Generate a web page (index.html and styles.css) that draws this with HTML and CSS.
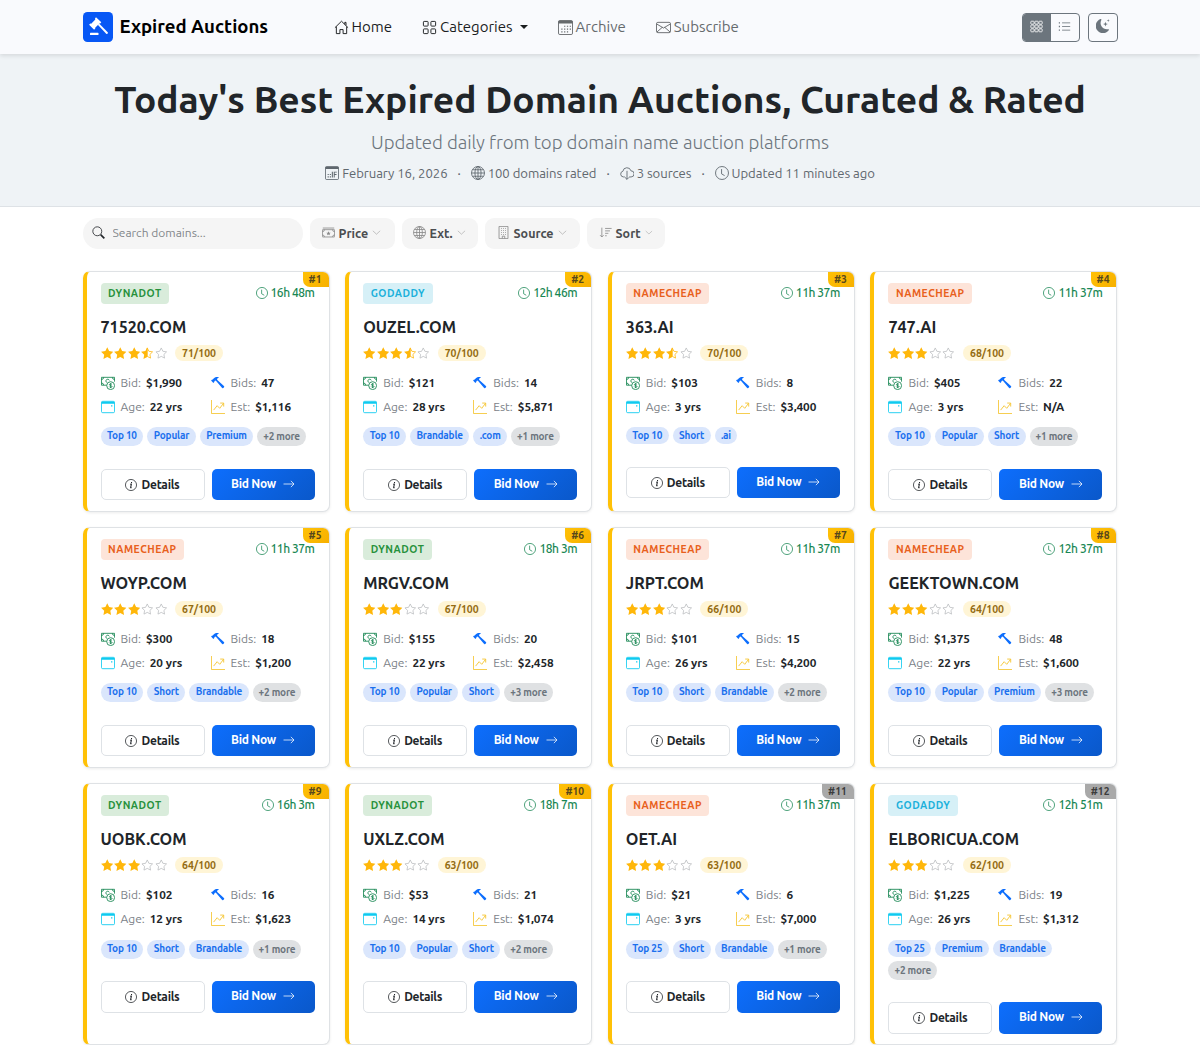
FILE: index.html
```html
<!DOCTYPE html>
<html lang="en">
<head>
  <meta charset="UTF-8">
  <meta name="viewport" content="width=device-width, initial-scale=1.0">
  <title>Expired Auctions</title>
  <link rel="stylesheet" href="styles.css">
</head>
<body>

  <!-- Icon sprite -->
  <svg class="sprite" xmlns="http://www.w3.org/2000/svg">
    <symbol id="house" viewBox="0 0 16 16"><path d="M1 8.2 8 1.3l7 6.900M2.500 7v7.500h3.800v-4.300h3.400v4.300h3.800V7M11.500 4.500V2.500h1.300v3.300"/></symbol>
    <symbol id="grid" viewBox="0 0 16 16"><rect x="1.500" y="1.500" width="5" height="5" rx=".8"/><rect x="9.500" y="1.500" width="5" height="5" rx=".8"/><rect x="1.500" y="9.500" width="5" height="5" rx=".8"/><rect x="9.500" y="9.500" width="5" height="5" rx=".8"/></symbol>
    <symbol id="calendar" viewBox="0 0 16 16"><rect x=".5" y=".5" width="15" height="15" rx="1.500"/><path class="fill" d="M.5 1h15v2.700H.5zM6.500 6h1.300v1.300h-1.300zm3 0h1.300v1.300h-1.300zm3 0h1.300v1.300h-1.300zm-9 3h1.300v1.300h-1.300zm3 0h1.300v1.300h-1.300zm3 0h1.300v1.300h-1.300zm3 0h1.300v1.300h-1.300zm-9 3h1.300v1.300h-1.300zm3 0h1.300v1.300h-1.300zm3 0h1.300v1.300h-1.300z"/></symbol>
    <symbol id="date" viewBox="0 0 16 16"><rect x=".5" y=".5" width="15" height="15" rx="1.500"/><path class="fill" d="M.5 1h15v2.300H.5zM3 9h1.300v1.300H3zM3 11.700h1.300V13H3zM5.500 9h1.300v1.300H5.500zM5.500 11.700h1.300V13H5.500zM7.800 6.500h1.200V13H7.800zM10 6.500h1.100V13H10zM11 6.500h2.500v1H11zM11 9.200h2.200v1H11z"/></symbol>
    <symbol id="envelope" viewBox="0 0 16 16"><rect x=".5" y="2.500" width="15" height="11" rx="1.500"/><path d="m.7 4.200 7.300 4.400 7.300-4.400M1 12.800l5.700-5M15 12.800l-5.700-5"/></symbol>
    <symbol id="grid3" viewBox="0 0 16 16"><rect x="1" y="1.500" width="4" height="3.600" rx=".8"/><rect x="6" y="1.500" width="4" height="3.600" rx=".8"/><rect x="11" y="1.500" width="4" height="3.600" rx=".8"/><rect x="1" y="6.200" width="4" height="3.600" rx=".8"/><rect x="6" y="6.200" width="4" height="3.600" rx=".8"/><rect x="11" y="6.200" width="4" height="3.600" rx=".8"/><rect x="1" y="10.900" width="4" height="3.600" rx=".8"/><rect x="6" y="10.900" width="4" height="3.600" rx=".8"/><rect x="11" y="10.900" width="4" height="3.600" rx=".8"/></symbol>
    <symbol id="list" viewBox="0 0 16 16"><path d="M5 3.500h10M5 8h10M5 12.500h10"/><path class="fill" d="M1 2.700h1.500v1.600H1zM1 7.200h1.500v1.600H1zM1 11.700h1.500v1.600H1z"/></symbol>
    <symbol id="moon" viewBox="0 0 16 16"><path class="fill" d="M6 .3a.8.800 0 0 1 .1.900A7.200 7.200 0 0 0 12.500 11.800c.5 0 1-.1 1.500-.2.700-.1 1.200.500.800 1A8.300 8.300 0 1 1 5.100.1a.8.800 0 0 1 .9.200M10.800 3.100l.7 2 2 .7-2 .7-.7 2-.7-2-2-.7 2-.7zM14 .1l.4 1.300 1.300.4-1.300.4-.4 1.300-.4-1.300-1.300-.4 1.300-.4z"/></symbol>
    <symbol id="globe" viewBox="0 0 16 16"><circle cx="8" cy="8" r="7.400"/><ellipse cx="8" cy="8" rx="3.500" ry="7.400"/><path d="M8 .6v14.800M.6 8h14.800M1.800 4.300h12.400M1.800 11.700h12.400"/></symbol>
    <symbol id="cloud" viewBox="0 0 16 16"><path d="M5.500 12.500H4a3.300 3.300 0 0 1-.7-6.500A4.700 4.700 0 0 1 12.500 5.500a3.500 3.500 0 0 1 .2 7H10.500M8 5.500v9.700M5.700 13 8 15.300l2.300-2.300"/></symbol>
    <symbol id="clock" viewBox="0 0 16 16"><circle cx="8" cy="8" r="7.400"/><path d="M7.500 3.500V9l3.500 2"/></symbol>
    <symbol id="search" viewBox="0 0 16 16"><circle cx="6.500" cy="6.500" r="5.500"/><path stroke-width="2" d="m10.600 10.600 4.600 4.600"/></symbol>
    <symbol id="cash" viewBox="0 0 16 16"><path d="M1 2.500h14"/><rect x=".5" y="4.500" width="15" height="9" rx=".5"/><path d="M3 4.500a2.500 2.500 0 0 1-2.500 2.500M13 4.500A2.500 2.500 0 0 0 15.500 7M.5 11A2.500 2.500 0 0 1 3 13.500M15.500 11a2.500 2.500 0 0 0-2.500 2.500"/><path class="fill" d="m8 6.500.8 1.700 1.900.2-1.400 1.200.4 1.900L8 10.600l-1.700.9.4-1.900-1.400-1.200 1.900-.2z"/></symbol>
    <symbol id="building" viewBox="0 0 16 16"><path d="M2.500.5h11v15h-11zM6.500 15.500v-3h3v3M5 3h1M7.500 3h1M10 3h1M5 5.500h1M7.500 5.500h1M10 5.500h1M5 8h1M7.500 8h1M10 8h1M5 10.500h1M7.500 10.500h1M10 10.500h1"/></symbol>
    <symbol id="sort" viewBox="0 0 16 16"><path d="M3.500 2v11.500M1.300 11.300l2.200 2.200 2.200-2.200M7.500 3h8M7.500 6h6M7.500 9h4M7.500 12h2"/></symbol>
    <symbol id="chevron" viewBox="0 0 16 16"><path d="m1.500 5 6.500 6 6.500-6"/></symbol>
    <symbol id="bid" viewBox="0 0 16 16"><path d="M6.500 10.500h-6v-9h15v5M3 1.500A2.500 2.500 0 0 1 .5 4M13 1.500A2.500 2.500 0 0 0 15.500 4M.5 8A2.500 2.500 0 0 1 3 10.500"/><path d="M9.500 5a2 2 0 1 0-2.700 2.500"/><circle cx="11" cy="11" r="4.500"/><path d="M12.500 9.700c-.3-1-2.900-1-2.900.2 0 1.400 3 .8 3 2.200 0 1.200-2.800 1.200-3.200 0M11 8.200v5.600"/></symbol>
    <symbol id="hammer" viewBox="0 0 16 16"><path class="fill" d="M9.200 1.500C7.200.7 4.800 1.100 3.300 2.600L1.700 4.200l-.4-.2-1.200 1.200 2.600 2.700 1.300-1.200-.2-.6 1-.9 1.100.4 6.600 7.900c.4.500 1.100.5 1.500.1l.9-.8c.4-.4.400-1.100-.1-1.500L7.200 4.700l-.3-1.300c.6-.8 1.300-1.200 2.300-1.900"/></symbol>
    <symbol id="age" viewBox="0 0 16 16"><rect x=".5" y="1.500" width="15" height="13" rx="1.500"/><path class="fill" d="M.5 2h15v2.200H.5zM11.500 6h1.500v1.500h-1.500z"/></symbol>
    <symbol id="graph" viewBox="0 0 16 16"><path d="M.5 0v15.500H16M3 11.500l4-5 3 3 4.300-5.700M10.500 3.500h4V7.500"/></symbol>
    <symbol id="star" viewBox="0 0 16 16"><path class="fill" d="m8 .3 2.400 4.900 5.500.8-4 3.800 1 5.500L8 12.700l-4.900 2.600 1-5.500-4-3.800 5.500-.8z"/></symbol>
    <symbol id="half" viewBox="0 0 16 16"><path d="m8 1.200 2.100 4.300 4.700.7-3.400 3.300.8 4.700L8 12z"/><path class="fill" d="M8 .3v12.400l-4.900 2.600 1-5.500-4-3.800 5.500-.8z"/></symbol>
    <symbol id="empty" viewBox="0 0 16 16"><path d="m8 1.200 2.100 4.300 4.700.7-3.400 3.300.8 4.700L8 12l-4.200 2.200.8-4.700-3.400-3.300 4.700-.7z"/></symbol>
    <symbol id="info" viewBox="0 0 16 16"><circle cx="8" cy="8" r="7.400"/><path stroke-width="1.400" d="M6.900 7.100 8.500 6.800 7.500 11.500q0 .5 1.400 0M8.700 3.900v1.300"/></symbol>
    <symbol id="arrow" viewBox="0 0 16 16"><path d="M.7 8h14M10.500 3.800 14.700 8l-4.200 4.200"/></symbol>
  </svg>

  <nav class="navbar">
    <div class="container">
      <a class="brand" href="#">
        <svg class="logo" viewBox="0 0 30 30">
          <rect width="30" height="30" rx="4.500" fill="#0757f5"/>
          <g fill="#fff">
            <path d="m13 5.200 5.300 5.100-1.100 1.200-.8-.1-4.200 4.300.1.900-1.200 1.200-5-5 1.200-1.200.9.100 4.100-4.300-.3-1z"/>
            <path d="m14.800 12.700 1.300-1.300 8.600 8.900c.8.900-.7 2.300-1.500 1.500z"/>
            <rect x="7" y="20.800" width="8.500" height="2.300" rx=".6"/>
          </g>
        </svg>
        <span>Expired Auctions</span>
      </a>
      <div class="nav-links">
        <a class="nav-link active" href="#"><svg class="icon"><use href="#house"/></svg><span>Home</span></a>
        <a class="nav-link active" href="#"><svg class="icon"><use href="#grid"/></svg><span>Categories</span><i class="caret"></i></a>
        <a class="nav-link" href="#"><svg class="icon"><use href="#calendar"/></svg><span>Archive</span></a>
        <a class="nav-link" href="#"><svg class="icon"><use href="#envelope"/></svg><span>Subscribe</span></a>
      </div>
      <div class="nav-tools">
        <div class="view-toggle">
          <button class="on" aria-label="Grid view"><svg class="icon"><use href="#grid3"/></svg></button>
          <button aria-label="List view"><svg class="icon"><use href="#list"/></svg></button>
        </div>
        <button class="theme-btn" aria-label="Dark mode"><svg class="icon"><use href="#moon"/></svg></button>
      </div>
    </div>
  </nav>

  <header class="hero">
    <h1>Today's Best Expired Domain Auctions, Curated &amp; Rated</h1>
    <p class="lead">Updated daily from top domain name auction platforms</p>
    <div class="meta">
      <span><svg class="icon"><use href="#date"/></svg>February 16, 2026</span>
      <b>·</b>
      <span><svg class="icon"><use href="#globe"/></svg>100 domains rated</span>
      <b>·</b>
      <span><svg class="icon"><use href="#cloud"/></svg>3 sources</span>
      <b>·</b>
      <span><svg class="icon"><use href="#clock"/></svg>Updated 11 minutes ago</span>
    </div>
  </header>

  <main class="container">
    <div class="filters">
      <label class="search">
        <svg class="icon"><use href="#search"/></svg>
        <input type="text" placeholder="Search domains...">
      </label>
      <button class="filter price"><svg class="icon"><use href="#cash"/></svg>Price<svg class="chev"><use href="#chevron"/></svg></button>
      <button class="filter ext"><svg class="icon"><use href="#globe"/></svg>Ext.<svg class="chev"><use href="#chevron"/></svg></button>
      <button class="filter source"><svg class="icon"><use href="#building"/></svg>Source<svg class="chev"><use href="#chevron"/></svg></button>
      <button class="filter sort"><svg class="icon"><use href="#sort"/></svg>Sort<svg class="chev"><use href="#chevron"/></svg></button>
    </div>
    <div class="cards" id="cards"></div>
  </main>

  <script src="script.js"></script>
</body>
</html>
```
FILE: styles.css
```css
* {
  box-sizing: border-box;
}

body {
  margin: 0;
  font-family: Ubuntu, "Noto Sans", "Open Sans", sans-serif;
  font-size: 15px;
  color: #212529;
  background: #fff;
  overflow: hidden;
}

a {
  color: inherit;
  text-decoration: none;
}

button, input {
  font-family: inherit;
}

.sprite {
  display: none;
}

symbol, .icon, .chev {
  fill: none;
  stroke: currentColor;
  stroke-width: 1;
}

.fill {
  fill: currentColor;
  stroke: none;
}

.icon {
  width: 14px;
  height: 14px;
  flex: none;
}

.container {
  width: 1035px;
  margin: 0 auto;
}

/* Navbar */
.navbar {
  position: relative;
  height: 54px;
  background: #f9fafd;
  box-shadow: 0 2px 4px rgba(0, 0, 0, 0.1);
}

.navbar .container {
  display: flex;
  align-items: center;
  height: 54px;
}

.brand {
  display: flex;
  align-items: center;
  gap: 7px;
  width: 251px;
  font-size: 18.6px;
  font-weight: 600;
  line-height: 24px;
  color: #000;
  white-space: nowrap;
}

.nav-link span {
  padding-bottom: 2px;
}

.logo {
  width: 30px;
  height: 30px;
}

.nav-links {
  display: flex;
  gap: 30px;
}

.nav-link {
  display: flex;
  align-items: center;
  gap: 3px;
  color: #666a6d;
}

.nav-link .icon {
  width: 15px;
  height: 15px;
}

.active {
  color: #1b1d1f;
}

.caret {
  margin-left: 4px;
  border: 4px solid transparent;
  border-top-color: #1b1d1f;
  border-bottom: 0;
}

.nav-tools {
  display: flex;
  gap: 8px;
  margin-left: auto;
}

.view-toggle {
  display: flex;
  border: 1px solid #6c757d;
  border-radius: 4px;
  overflow: hidden;
}

.nav-tools button {
  display: flex;
  align-items: center;
  justify-content: center;
  width: 28px;
  height: 27px;
  padding: 0 0 2px;
  border: 0;
  background: transparent;
  color: #6c757d;
}

.nav-tools .icon {
  width: 13px;
  height: 13px;
}

.nav-tools .view-toggle .on {
  background: #6c757d;
  color: #fff;
}

.nav-tools .theme-btn {
  width: 30px;
  height: 29px;
  border: 1px solid #6c757d;
  border-radius: 4px;
}

.theme-btn .icon {
  width: 14px;
  height: 14px;
}

/* Hero */
.hero {
  height: 153px;
  padding-top: 20px;
  background: #eff3f6;
  border-bottom: 1px solid #dee2e6;
  text-align: center;
}

h1 {
  margin: 0;
  font-size: 37.2px;
  font-weight: 600;
  line-height: 50px;
  white-space: nowrap;
}

.lead {
  margin: 6px 0 0;
  font-size: 18.75px;
  font-weight: 300;
  line-height: 26px;
  letter-spacing: -0.08px;
  color: #6c757d;
}

.meta {
  display: flex;
  justify-content: center;
  gap: 10px;
  margin-top: 7px;
  font-size: 13.125px;
  line-height: 20px;
  letter-spacing: -0.05px;
  color: #5f676e;
}

.meta span {
  display: flex;
  align-items: center;
  gap: 3px;
}

.meta b {
  font-weight: 500;
}

/* Filters */
.filters {
  display: flex;
  gap: 7px;
  height: 31px;
  margin-top: 11px;
}

.search {
  display: flex;
  align-items: center;
  gap: 8px;
  width: 220px;
  padding: 0 9px 2px;
  border-radius: 16px;
  background: #f5f5f5;
}

.search .icon {
  width: 13px;
  height: 13px;
}

.search input {
  width: 170px;
  padding: 0;
  border: 0;
  outline: 0;
  background: transparent;
  font-size: 12px;
}

.search input::placeholder {
  color: #82868a;
}

.filter {
  display: flex;
  align-items: center;
  gap: 4px;
  width: 85px;
  padding: 0 12px 2px;
  border: 0;
  border-radius: 9px;
  background: #f5f5f5;
  font-size: 12.500px;
  font-weight: 600;
  color: #4b4d50;
}

.filter .icon {
  width: 13px;
  height: 13px;
  color: #888;
}

.chev {
  width: 9px;
  height: 9px;
  color: #999;
}

.ext {
  width: 76px;
  padding-left: 11px;
}

.source {
  width: 95px;
}

.sort {
  width: 78px;
}

/* Cards */
.cards {
  display: grid;
  grid-template-columns: repeat(4, 247px);
  justify-content: space-between;
  row-gap: 15.2px;
  margin-top: 22px;
}

.card {
  position: relative;
  min-height: 241px;
  padding: 11px 14px 10.5px 14px;
  border: 1px solid #dfe2e5;
  border-left: 4px solid #ffc107;
  border-radius: 7px;
  background: #fff;
  box-shadow: 0 1px 3px rgba(0, 0, 0, 0.08);
}

.rank {
  position: absolute;
  top: 0;
  right: 0;
  padding: 0 7px 0 6px;
  border-radius: 0 6px 0 7px;
  background: linear-gradient(135deg, #ffc107, #f7b000);
  font-size: 10.300px;
  font-weight: 600;
  line-height: 15px;
  color: #57481c;
}

.rank.gray {
  background: #a9a9a9;
  color: #3c3c3c;
}

.card-top {
  display: flex;
  justify-content: space-between;
  height: 21px;
}

.platform {
  padding: 0 7.5px;
  border-radius: 4px;
  font-size: 10.300px;
  font-weight: 600;
  line-height: 21px;
  letter-spacing: 0.5px;
}

.dynadot {
  background: #d9ecdb;
  color: #27913b;
}

.godaddy {
  background: #d6f0f7;
  color: #1bb0db;
}

.namecheap {
  background: #fde4d9;
  color: #e8601c;
}

.time {
  display: flex;
  align-items: center;
  gap: 3px;
  padding-bottom: 1px;
  font-size: 12px;
  font-weight: 500;
  line-height: 18px;
  letter-spacing: -0.45px;
  color: #198754;
}

.time .icon {
  width: 12px;
  height: 12px;
}

.name {
  margin: 12px 0 7px;
  font-size: 16.1px;
  font-weight: 600;
  line-height: 22px;
}

.rating {
  display: flex;
  align-items: center;
  height: 16px;
}

.rating svg {
  width: 12.5px;
  height: 12.5px;
  margin-right: 1px;
  fill: none;
  stroke: currentColor;
  color: #ffb70a;
}

.rating .off {
  color: #bbbec0;
}

.score {
  margin-left: 7px;
  padding: 0 7px;
  border-radius: 8px;
  background: #fff5d6;
  font-size: 10.500px;
  font-weight: 600;
  line-height: 16px;
  color: #946c12;
}

.stats {
  display: grid;
  grid-template-columns: 110px 1fr;
  row-gap: 6.3px;
  margin-top: 12.500px;
  font-size: 12px;
  line-height: 18px;
}

.stats div {
  display: flex;
  align-items: center;
  white-space: nowrap;
}

.stats span {
  margin: 0 5px 0 6px;
  color: #7c8288;
}

.stats b {
  font-weight: 600;
  font-size: 11.800px;
  letter-spacing: -0.05px;
}

.i-bid { color: #198754; }
.i-hammer { color: #0d6efd; }
.i-age { color: #0dcaf0; }
.i-graph { color: #f5c32c; }

.tags {
  display: flex;
  flex-wrap: wrap;
  gap: 4px;
  margin-top: 11.5px;
}

.tag {
  padding: 0 6.500px;
  border-radius: 10px;
  background: #dae6fc;
  font-size: 10px;
  font-weight: 600;
  line-height: 17px;
  letter-spacing: -0.2px;
  color: #1b70ee;
}

.more {
  padding: 0 6px;
  background: #dfe1e3;
  line-height: 19px;
  color: #6c757d;
}

.actions {
  display: grid;
  grid-template-columns: 104px 103px;
  gap: 7px;
  margin-top: 22.5px;
}

.btn {
  display: flex;
  align-items: center;
  justify-content: center;
  gap: 4px;
  height: 31.5px;
  border: 1px solid #dee2e6;
  border-radius: 5px;
  font-size: 12px;
  font-weight: 600;
  letter-spacing: -0.25px;
}

.btn .icon {
  width: 12px;
  height: 12px;
}

.bid-now {
  gap: 7px;
  padding-bottom: 2px;
  border: 0;
  background: linear-gradient(135deg, #0d6efd, #0a58ca);
  color: #fff;
}
```
FILE: script.js
```js
// rank, platform, time left, domain, score, bid, bids, age, estimate, tags, hidden tags
const auctions = [
  [1, 'dynadot', '16h 48m', '71520.COM', 71, '$1,990', 47, '22 yrs', '$1,116', ['Top 10', 'Popular', 'Premium'], 2],
  [2, 'godaddy', '12h 46m', 'OUZEL.COM', 70, '$121', 14, '28 yrs', '$5,871', ['Top 10', 'Brandable', '.com'], 1],
  [3, 'namecheap', '11h 37m', '363.AI', 70, '$103', 8, '3 yrs', '$3,400', ['Top 10', 'Short', '.ai'], 0],
  [4, 'namecheap', '11h 37m', '747.AI', 68, '$405', 22, '3 yrs', 'N/A', ['Top 10', 'Popular', 'Short'], 1],
  [5, 'namecheap', '11h 37m', 'WOYP.COM', 67, '$300', 18, '20 yrs', '$1,200', ['Top 10', 'Short', 'Brandable'], 2],
  [6, 'dynadot', '18h 3m', 'MRGV.COM', 67, '$155', 20, '22 yrs', '$2,458', ['Top 10', 'Popular', 'Short'], 3],
  [7, 'namecheap', '11h 37m', 'JRPT.COM', 66, '$101', 15, '26 yrs', '$4,200', ['Top 10', 'Short', 'Brandable'], 2],
  [8, 'namecheap', '12h 37m', 'GEEKTOWN.COM', 64, '$1,375', 48, '22 yrs', '$1,600', ['Top 10', 'Popular', 'Premium'], 3],
  [9, 'dynadot', '16h 3m', 'UOBK.COM', 64, '$102', 16, '12 yrs', '$1,623', ['Top 10', 'Short', 'Brandable'], 1],
  [10, 'dynadot', '18h 7m', 'UXLZ.COM', 63, '$53', 21, '14 yrs', '$1,074', ['Top 10', 'Popular', 'Short'], 2],
  [11, 'namecheap', '11h 37m', 'OET.AI', 63, '$21', 6, '3 yrs', '$7,000', ['Top 25', 'Short', 'Brandable'], 1],
  [12, 'godaddy', '12h 51m', 'ELBORICUA.COM', 62, '$1,225', 19, '26 yrs', '$1,312', ['Top 25', 'Premium', 'Brandable'], 2]
];

const icon = (name, cls = '') => `<svg class="icon ${cls}"><use href="#${name}"/></svg>`;

function stars(score) {
  const fourth = score >= 70 ? 'half' : 'empty';
  return ['star', 'star', 'star', fourth, 'empty']
    .map(s => `<svg class="${s === 'empty' ? 'off' : ''}"><use href="#${s}"/></svg>`).join('');
}

document.getElementById('cards').innerHTML = auctions.map(
  ([rank, platform, time, name, score, bid, bids, age, est, tags, more]) => `
  <article class="card">
    <span class="rank ${rank > 10 ? 'gray' : ''}">#${rank}</span>
    <div class="card-top">
      <span class="platform ${platform}">${platform.toUpperCase()}</span>
      <span class="time">${icon('clock')}${time}</span>
    </div>
    <h2 class="name">${name}</h2>
    <div class="rating">${stars(score)}<span class="score">${score}/100</span></div>
    <div class="stats">
      <div>${icon('bid', 'i-bid')}<span>Bid:</span><b>${bid}</b></div>
      <div>${icon('hammer', 'i-hammer')}<span>Bids:</span><b>${bids}</b></div>
      <div>${icon('age', 'i-age')}<span>Age:</span><b>${age}</b></div>
      <div>${icon('graph', 'i-graph')}<span>Est:</span><b>${est}</b></div>
    </div>
    <div class="tags">
      ${tags.map(t => `<span class="tag">${t}</span>`).join('')}
      ${more ? `<span class="tag more">+${more} more</span>` : ''}
    </div>
    <div class="actions">
      <a class="btn" href="#">${icon('info')}Details</a>
      <a class="btn bid-now" href="#">Bid Now${icon('arrow')}</a>
    </div>
  </article>`).join('');
```
